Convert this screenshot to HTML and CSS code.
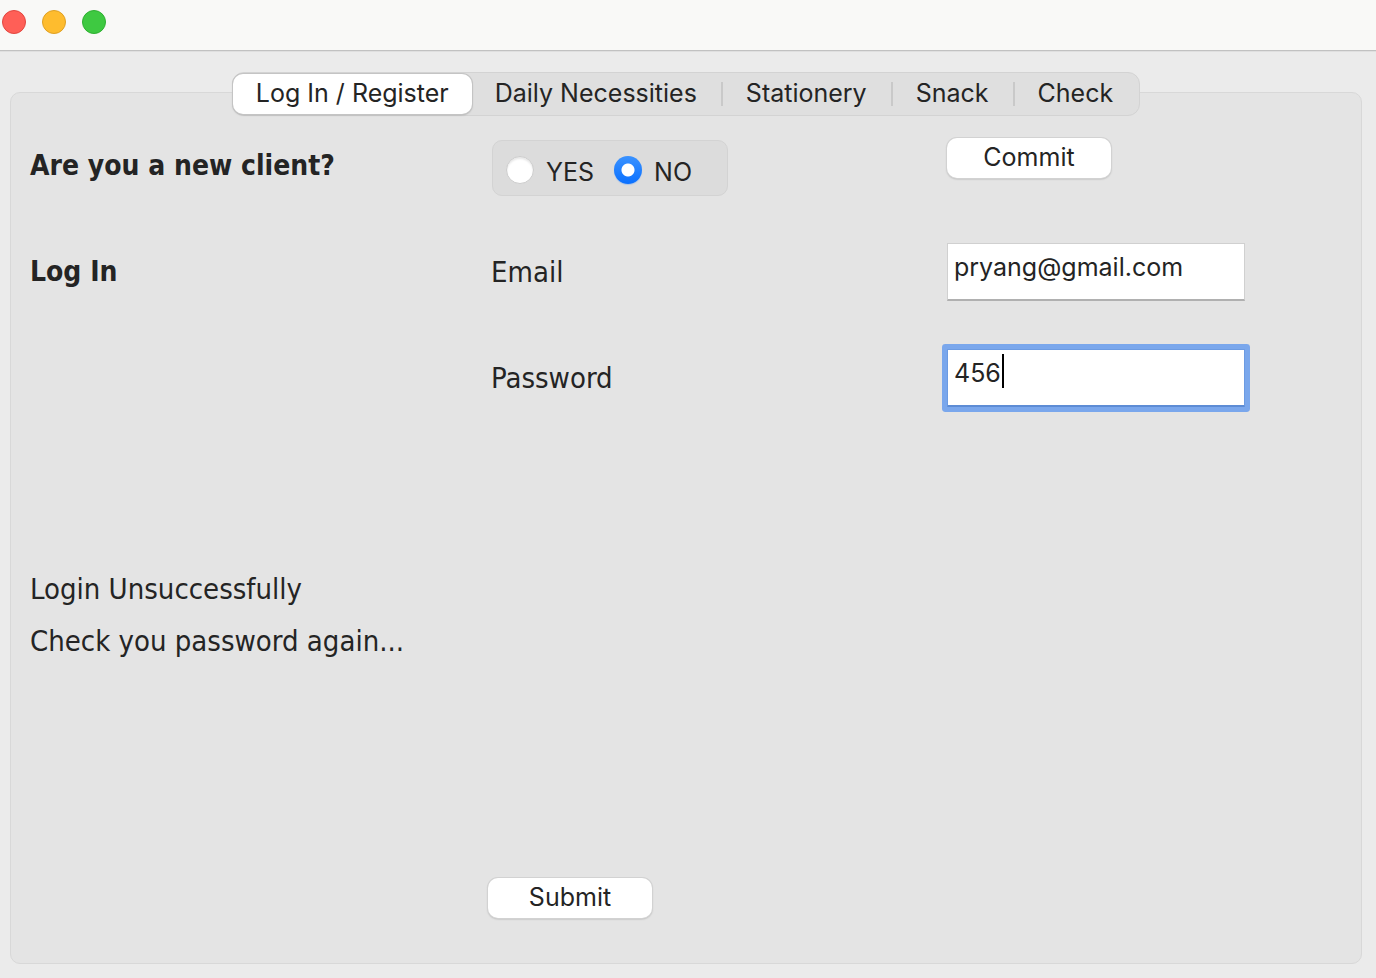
FILE: index.html
```
<!DOCTYPE html>
<html lang="en">
<head>
<meta charset="utf-8">
<meta name="viewport" content="width=device-width, initial-scale=1">
<title>Log In / Register</title>
<link rel="stylesheet" href="styles.css">
</head>
<body>
<header class="titlebar">
  <button class="light light-close" type="button" aria-label="Close"></button>
  <button class="light light-minimize" type="button" aria-label="Minimize"></button>
  <button class="light light-zoom" type="button" aria-label="Zoom"></button>
</header>
<main class="window">
  <nav class="tabs" role="tablist">
    <button class="tab tab-active" type="button" role="tab" aria-selected="true">Log In / Register</button>
    <button class="tab" type="button" role="tab" aria-selected="false">Daily Necessities</button>
    <span class="divider"></span>
    <button class="tab" type="button" role="tab" aria-selected="false">Stationery</button>
    <span class="divider"></span>
    <button class="tab" type="button" role="tab" aria-selected="false">Snack</button>
    <span class="divider"></span>
    <button class="tab" type="button" role="tab" aria-selected="false">Check</button>
  </nav>
  <form class="panel">
    <h1 class="hand heading">Are you a new client?</h1>
    <div class="choices" role="radiogroup" aria-label="Are you a new client?">
      <label class="choice"><input class="radio" type="radio" name="client" value="yes">YES</label>
      <label class="choice"><input class="radio" type="radio" name="client" value="no" checked>NO</label>
    </div>
    <button class="push commit" type="button">Commit</button>

    <h2 class="hand heading login">Log In</h2>
    <label class="hand field-label email-label" for="email">Email</label>
    <div class="field email-field"><input class="text" id="email" type="text" value="pryang@gmail.com"></div>

    <label class="hand field-label password-label" for="password">Password</label>
    <div class="field field-focused"><input class="text" id="password" type="text" value="456"><span class="caret"></span></div>

    <p class="hand message">Login Unsuccessfully<br>Check you password again...</p>
    <button class="push submit" type="button">Submit</button>
  </form>
</main>
</body>
</html>
```
FILE: styles.css
```
* { box-sizing: border-box; }

body {
  margin: 0;
  min-height: 100vh;
  display: flex;
  flex-direction: column;
  background: #ebebeb;
  color: #242424;
  font: 25px/40px Inter, "Liberation Sans", sans-serif;
}

button, input { font: inherit; color: inherit; }
button { border: 0; padding: 0; }

.titlebar {
  display: flex;
  gap: 16px;
  padding: 10px 2px 16px;
  background: #f9f9f7;
  border-bottom: 1px solid #c1c1c1;
  box-shadow: 0 1px #dfdfdf;
}
.light { width: 24px; height: 24px; border-radius: 50%; border: 1px solid; }
.light-close { background: #ff5f57; border-color: #e2463f; }
.light-minimize { background: #febc2e; border-color: #dfa023; }
.light-zoom { background: #3ec941; border-color: #2eb031; }

.window {
  flex: 1;
  display: flex;
  flex-direction: column;
  padding: 21px 14px 14px 10px;
}

.tabs {
  position: relative;
  z-index: 1;
  align-self: center;
  display: flex;
  align-items: center;
  height: 44px;
  padding: 0 2px 0 0;
  border: 1px solid #d3d3d3;
  border-radius: 12px;
  background: #dfdfdf;
}
.tab { height: 40px; padding: 0 24px 2px 23px; line-height: 38px; background: none; white-space: nowrap; }
.tab-active {
  padding: 0 23px 2px;
  border-radius: 10px;
  background: #fff;
  box-shadow: 0 0 0 1px #c4c4c4, 0 1px 2px #999;
}
.divider { width: 2px; height: 24px; background: #c9c9c9; }

.panel {
  flex: 1;
  display: grid;
  grid-template-columns: 458fr 459fr 395fr;
  grid-template-rows: repeat(8, minmax(80px, 1fr));
  align-items: start;
  justify-items: start;
  margin-top: -24px;
  padding: 24px 19px 0;
  border: 1px solid #d8d8d8;
  border-radius: 10px;
  background: #e4e4e4;
}

.hand {
  margin: 23px 0 0;
  font-family: "Bradley Hand", "DejaVu Sans Condensed", sans-serif;
  font-size: 29px;
  font-weight: 400;
  line-height: 52px;
}
.heading { font-weight: 700; font-size: 28px; }
.field-label { grid-column: 2; padding-left: 3px; }

.choices {
  display: flex;
  align-items: center;
  gap: 20px;
  width: 236px;
  height: 56px;
  margin: 23px 0 0 4px;
  padding: 8px 13px 0;
  border: 1px solid #d3d3d3;
  border-radius: 10px;
  background: #dcdcdc;
}
.choice { display: flex; align-items: center; gap: 12px; }
.radio {
  appearance: none;
  width: 28px;
  height: 28px;
  margin: 0 0 4px;
  border: 1px solid #ccc;
  border-radius: 50%;
  background: #fff;
  box-shadow: inset 0 2px 2px #e8e8e8;
}
.radio:checked {
  border: 0;
  background: radial-gradient(circle, #fff 6px, transparent 7px), linear-gradient(#3a92ff, #0a70ff);
  box-shadow: 0 1px 1px #a9c4e8;
}

.push {
  width: 164px;
  height: 40px;
  margin-top: 21px;
  padding-bottom: 2px;
  line-height: 38px;
  border-radius: 10px;
  background: #fff;
  box-shadow: 0 0 0 1px #d2d2d2, 0 1px 2px #999;
}

.field { position: relative; grid-column: 3; width: 298px; max-width: 100%; margin-top: 20px; }
.text {
  display: block;
  width: 100%;
  height: 58px;
  padding: 0 6px 9px;
  border: 1px solid #d0d0d0;
  border-bottom: 2px solid #b0b0b0;
  border-radius: 0;
  background: #fff;
  outline: 0;
}
.field-focused .text {
  border-color: #6c9be2;
  border-bottom-color: #5d8cd5;
  box-shadow: 0 0 0 5px #7aa7ec;
  border-radius: 1px;
}
.caret { position: absolute; left: 55px; top: 5px; width: 2px; height: 34px; background: #000; }

.commit { grid-column: 3; }
.login { grid-row: 2; grid-column: 1; }
.email-label, .email-field { grid-row: 2; }
.password-label, .field-focused { grid-row: 3; }
.message { grid-row: 5 / 7; grid-column: 1 / 3; }
.submit { grid-row: 8; grid-column: 2; }
```
